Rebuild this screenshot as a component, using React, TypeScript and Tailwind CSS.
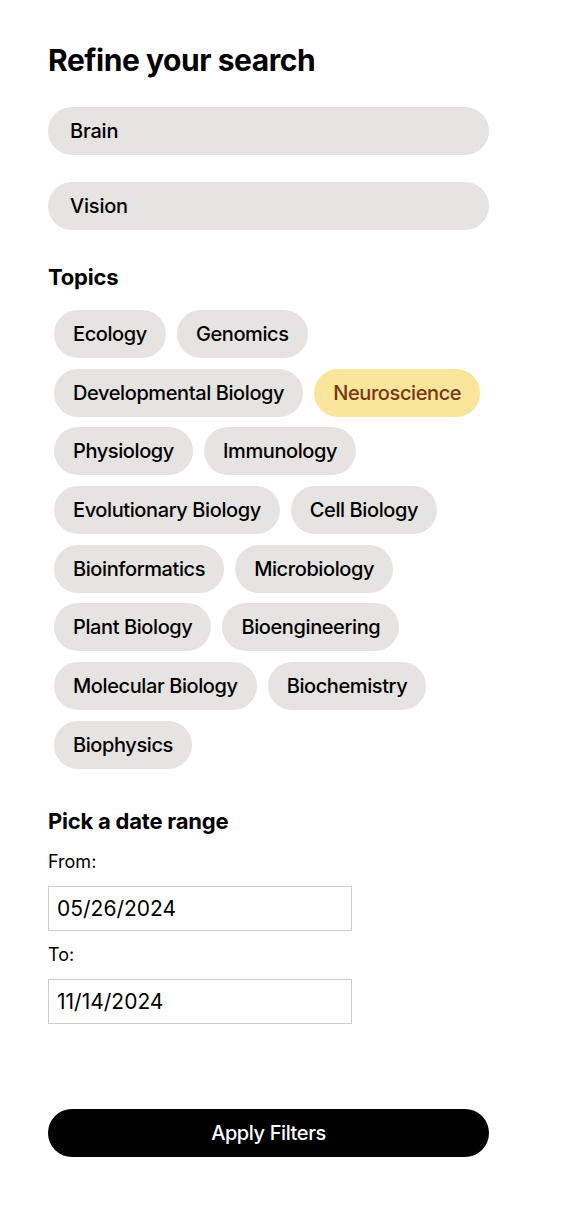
const topics = [
  "Ecology",
  "Genomics",
  "Developmental Biology",
  "Neuroscience",
  "Physiology",
  "Immunology",
  "Evolutionary Biology",
  "Cell Biology",
  "Bioinformatics",
  "Microbiology",
  "Plant Biology",
  "Bioengineering",
  "Molecular Biology",
  "Biochemistry",
  "Biophysics",
];

const selected = ["Neuroscience"];

const App = () => {
  return (
    <div
      className="min-h-[1222px] bg-white text-black px-12 pt-[42px]"
      style={{ fontFamily: "Inter, 'Noto Sans', sans-serif" }}
    >
      <div className="w-[441px]">
        <h1 className="text-[30px] leading-9 font-bold tracking-[-0.015em]">
          Refine your search
        </h1>

        <div className="flex flex-col gap-[27px] mt-[29px]">
          <input
            defaultValue="Brain"
            className="h-12 w-full rounded-full bg-[#e5e4e2] px-[22px] text-[20px] font-medium tracking-[-0.01em] outline-none"
          />
          <input
            defaultValue="Vision"
            className="h-12 w-full rounded-full bg-[#e5e4e2] px-[22px] text-[20px] font-medium tracking-[-0.01em] outline-none"
          />
        </div>

        <h2 className="mt-[33px] text-[22px] leading-7 font-bold tracking-[-0.01em]">
          Topics
        </h2>
        <div className="mt-[19px] pl-[6px] flex flex-wrap gap-x-[11px] gap-y-[10.7px]">
          {topics.map((t) => {
            const active = selected.includes(t);
            return (
              <button
                key={t}
                className={
                  active
                    ? "h-12 rounded-full px-[19px] text-[20px] font-medium tracking-[-0.02em] bg-[#f9e69a] text-[#7a3513]"
                    : "h-12 rounded-full px-[19px] text-[20px] font-medium tracking-[-0.02em] bg-[#e5e4e2] text-black"
                }
              >
                {t}
              </button>
            );
          })}
        </div>

        <h2 className="mt-[38px] text-[22px] leading-7 font-bold tracking-[-0.01em]">
          Pick a date range
        </h2>
        <p className="mt-[15px] text-[18px] leading-6">From:</p>
        <input
          defaultValue="05/26/2024"
          className="mt-3 h-[45px] w-[304px] border border-[#cccccc] px-2 text-[21px] outline-none"
        />
        <p className="mt-3 text-[18px] leading-6">To:</p>
        <input
          defaultValue="11/14/2024"
          className="mt-3 h-[45px] w-[304px] border border-[#cccccc] px-2 text-[21px] outline-none"
        />

        <button className="mt-[85px] h-12 w-full rounded-full bg-black text-white text-[20px] font-medium tracking-[-0.02em]">
          Apply Filters
        </button>
      </div>
    </div>
  );
};

export default App;
